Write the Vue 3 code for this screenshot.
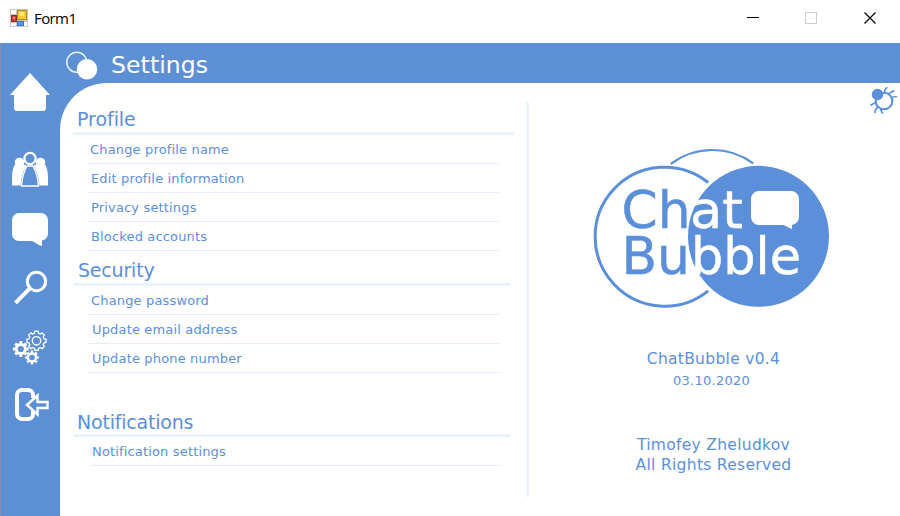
<script setup>
const sections = [
  { id: 'profile', title: 'Profile', items: ['Change profile name', 'Edit profile information', 'Privacy settings', 'Blocked accounts'] },
  { id: 'security', title: 'Security', items: ['Change password', 'Update email address', 'Update phone number'] },
  { id: 'notifications', title: 'Notifications', items: ['Notification settings'] }
]

function gearPath(cx, cy, outer, inner, teeth) {
  const step = (Math.PI * 2) / teeth
  const pt = (r, a) => `${(cx + r * Math.cos(a)).toFixed(2)} ${(cy + r * Math.sin(a)).toFixed(2)}`
  let d = ''
  for (let i = 0; i < teeth; i++) {
    const a = i * step
    d += `${i ? 'L' : 'M'}${pt(inner, a - step * 0.32)}L${pt(outer, a - step * 0.22)}L${pt(outer, a + step * 0.22)}L${pt(inner, a + step * 0.32)}`
  }
  return d + 'Z'
}
const gears = {
  large: gearPath(36.5, 20.8, 9.7, 7.8, 8),
  left: gearPath(20.8, 29, 8, 6, 8),
  bottom: gearPath(32, 37.5, 7, 5.2, 8)
}
</script>

<template>
  <div class="window">
    <header class="titlebar">
      <svg class="app-icon" width="18" height="18" viewBox="0 0 18 18">
        <rect width="18" height="18" fill="#c9c9c9" />
        <path d="M1 1h5v4H1zM1 14h5v3H1zM14 13h3v4h-3z" fill="#fff" />
        <rect x="7.5" y="1.5" width="9" height="9" fill="#f6c936" stroke="#b58a16" />
        <rect x="9" y="3" width="5" height="4" fill="#ffe583" />
        <rect x="1.5" y="6.5" width="5" height="6" fill="#c9402f" stroke="#982a22" />
        <rect x="3" y="8" width="2" height="2" fill="#f08b76" />
        <rect x="7.5" y="12.5" width="6" height="4" fill="#5c98ec" stroke="#3c70c8" />
      </svg>
      <span class="window-title">Form1</span>
      <svg class="controls" width="150" height="43" viewBox="750 0 150 43" shape-rendering="crispEdges">
        <path d="M747 17.5h12" stroke="#000" />
        <rect x="805.5" y="12.5" width="11" height="11" fill="none" stroke="#ccc" />
        <path d="M864.5 12.5l11 11M875.5 12.5l-11 11" stroke="#000" shape-rendering="auto" stroke-width="1.2" />
      </svg>
    </header>

    <div class="body">
      <nav class="sidebar">
        <svg class="home" width="60" height="50" viewBox="0 67 60 50">
          <path fill="#fff" d="M30 73L50 95H46V108a3 3 0 0 1-3 3H17a3 3 0 0 1-3-3V95H10z" />
        </svg>
        <svg class="people" width="60" height="50" viewBox="0 145 60 50">
          <g fill="#fff">
            <circle cx="19.5" cy="162.5" r="4.8" />
            <circle cx="40.5" cy="162.5" r="4.8" />
            <path d="M14.5 165H26L26 167C22.5 172 21 179 20.5 185.5H12V178C12 172 13 168 14.5 165z" />
            <path d="M45.5 165H34L34 167C37.5 172 39 179 39.5 185.5H48V178C48 172 47 168 45.5 165z" />
          </g>
          <path d="M21.5 186C22 178 24 171.5 27 166H33C36 171.5 38 178 38.5 186z" fill="#5c8fd4" stroke="#fff" stroke-width="1.4" />
          <circle cx="30" cy="158.500" r="5.600" fill="#5c8fd4" stroke="#fff" stroke-width="2.300" />
        </svg>
        <svg class="chat" width="60" height="50" viewBox="0 205 60 50">
          <path fill="#fff" d="M19 213H41a7 7 0 0 1 7 7V233.500a7 7 0 0 1-6 7V246C38.500 245.500 36 243 32 241H19a7 7 0 0 1-7-7V220a7 7 0 0 1 7-7z" />
        </svg>
        <svg class="search" width="60" height="50" viewBox="0 263 60 50">
          <circle cx="36.500" cy="281.500" r="9.200" fill="none" stroke="#fff" stroke-width="3" />
          <path d="M30 288.200L15.500 302.800" stroke="#fff" stroke-width="4" />
        </svg>
        <svg class="gears" width="60" height="50" viewBox="0 0 60 50">
          <g fill="none" stroke="#fff">
            <path :d="gears.large" stroke-width="1.300" stroke-linejoin="round" />
            <circle cx="36.500" cy="20.800" r="4.200" stroke-width="1.300" />
          </g>
          <path :d="gears.left" fill="#fff" /><circle cx="20.800" cy="29" r="3.100" fill="#5c8fd4" />
          <path :d="gears.bottom" fill="#fff" /><circle cx="32" cy="37.500" r="2.800" fill="#5c8fd4" />
        </svg>
        <svg class="exit" width="60" height="50" viewBox="0 380 60 50">
          <path d="M33 398V395a5 5 0 0 0-5-5H22a5 5 0 0 0-5 5V414a5 5 0 0 0 5 5H28a5 5 0 0 0 5-5V411" fill="none" stroke="#fff" stroke-width="4" />
          <path d="M27 405L37.500 395.500V402H47.500V408H37.500V414.500z" fill="#5c8fd4" stroke="#fff" stroke-width="2.400" />
        </svg>
      </nav>

      <div class="main">
        <div class="page-head">
          <svg width="36" height="36" viewBox="64 47 36 36">
            <circle cx="76.800" cy="62.300" r="10" fill="none" stroke="#e6f3ff" stroke-width="1.500" />
            <circle cx="87" cy="69.200" r="10.300" fill="#fff" />
          </svg>
          <h1>Settings</h1>
        </div>

        <div class="corner">
          <div class="panel">
            <div class="settings">
              <section v-for="s in sections" :key="s.id" :class="s.id">
                <h2>{{ s.title }}</h2>
                <ul>
                  <li v-for="item in s.items" :key="item">{{ item }}</li>
                </ul>
              </section>
            </div>
            <div class="divider"></div>
            <aside class="about">
              <svg class="bug" width="30" height="30" viewBox="868 85 30 30">
                <g fill="none" stroke="#5c8fd9" stroke-width="1.700">
                  <circle cx="884" cy="101" r="8.300" stroke-width="2.100" />
                  <path d="M884.500 92.500C884.500 90 885.500 88 887.500 87.500M888.500 94.500C889 92.500 891 92.500 892.500 91.500L894.500 90.500M891.500 98C893 96.500 894.500 96.500 897 96.500M876.500 102.500C874.500 102.500 873 104 870.500 105.500M878.500 107C876 108 875 109.500 875 113M880.500 108.500C881.500 111 881 112.500 883 113.500" />
                </g>
                <circle cx="877.500" cy="94.500" r="5.700" fill="#5c8fd9" />
              </svg>
              <svg class="logo" width="250" height="170" viewBox="586 144 250 170">
                <g fill="none" stroke="#5c8fd9">
                  <path d="M670.800 164A69 69 0 0 1 753.200 163.300" stroke-width="2.200" />
                  <path d="M708.200 182.500A69.500 69.500 0 1 0 708.200 290.800" stroke-width="3" />
                </g>
                <circle cx="758.500" cy="236.300" r="70.500" fill="#5c8fd9" />
                <g class="logo-text">
                  <text class="ink" x="621.500" y="228" textLength="69" lengthAdjust="spacingAndGlyphs">Ch</text>
                  <text class="light" x="690" y="228" textLength="53" lengthAdjust="spacingAndGlyphs">at</text>
                  <text class="ink" x="621.500" y="274" textLength="68.500" lengthAdjust="spacingAndGlyphs">Bu</text>
                  <text class="light" x="691" y="274" textLength="110" lengthAdjust="spacingAndGlyphs">bble</text>
                </g>
                <path fill="#fff" d="M759 191H791a8 8 0 0 1 8 8V217a8 8 0 0 1-7 8V229C789 228.500 787 226 783 225H759a8 8 0 0 1-8-8V199a8 8 0 0 1 8-8z" />
              </svg>
              <p class="version">ChatBubble v0.4</p>
              <p class="date">03.10.2020</p>
              <p class="author">Timofey Zheludkov</p>
              <p class="rights">All Rights Reserved</p>
            </aside>
          </div>
        </div>
      </div>
    </div>
  </div>
</template>

<style>
body { margin: 0; background: #fff; }
</style>

<style scoped>
.window {
  width: 900px;
  height: 516px;
  display: flex;
  flex-direction: column;
  overflow: hidden;
  background: #fff;
  color: #5c8fd9;
  font-family: Verdana, "DejaVu Sans", sans-serif;
}
.window svg { display: block; flex: none; }
.titlebar {
  height: 43px;
  flex: none;
  display: flex;
  align-items: flex-start;
  background: #fff;
}
.app-icon { margin: 9px 0 0 10px; }
.window-title {
  margin: 8px 0 0 6px;
  font: 15px/20px "Open Sans", "Noto Sans", sans-serif;
  letter-spacing: -0.6px;
  color: #000;
}
.controls { margin-left: auto; overflow: visible; }
.body { flex: 1; display: flex; min-height: 0; }
.sidebar {
  width: 60px;
  box-sizing: border-box;
  flex: none;
  background: #5c8fd4;
  box-shadow: inset 1px 0 #7d93b0;
  padding-top: 24px;
  display: flex;
  flex-direction: column;
}
.people { margin-top: 28px; }
.chat { margin-top: 10px; }
.search { margin-top: 8px; }
.gears { margin-top: 7px; }
.exit { margin-top: 10px; }
.main { flex: 1; display: flex; flex-direction: column; min-width: 0; }
.page-head {
  height: 40px;
  flex: none;
  display: flex;
  align-items: flex-start;
  background: #5c8fd4;
  padding: 4px 0 0 4px;
  box-sizing: border-box;
}
h1 {
  margin: 4px 0 0 11px;
  font-size: 23.5px;
  line-height: 28px;
  font-weight: 400;
  letter-spacing: 0.1px;
  color: #fff;
}
.corner { flex: 1; background: #5c8fd4; display: flex; min-height: 0; }
.panel { flex: 1; display: flex; background: #fff; border-top-left-radius: 47px; }
.settings { width: 466px; flex: none; }
h2 {
  margin: 0 0 0 14px;
  height: 35px;
  width: 437px;
  box-sizing: border-box;
  border-bottom: 3px solid #eaf2ff;
  padding-left: 4px;
  display: flex;
  align-items: flex-end;
  font-size: 19px;
  line-height: 25px;
  font-weight: 400;
  letter-spacing: -0.2px;
}
.profile h2 { height: 52px; width: 441px; margin-left: 13px; letter-spacing: -0.05px; }
.notifications h2 { height: 64px; padding-left: 3px; line-height: 24px; }
ul { list-style: none; margin: 0 0 0 29px; padding: 0; width: 411px; }
.profile ul { margin-left: 28px; width: 411px; }
.notifications ul { margin-left: 30px; }
li {
  height: 29px;
  box-sizing: border-box;
  border-bottom: 1px solid #e2edff;
  padding-left: 2px;
  font-size: 13px;
  line-height: 30px;
  letter-spacing: 0.16px;
}
.profile li:nth-child(n + 2), .security li:nth-child(n + 2) { padding-left: 3px; }
.divider { width: 3px; height: 395px; margin-top: 19px; background: #ebf3ff; }
.about { flex: 1; display: flex; flex-direction: column; align-items: center; padding-right: 7px; }
.bug { align-self: flex-end; margin: 2px -5px 0 0; }
.logo { margin-top: 29px; }
.about p { margin: 0 0 0 5px; white-space: nowrap; letter-spacing: 0.3px; }
.version { padding-top: 35px; font-size: 15.5px; line-height: 20px; }
.about .date { font-size: 13px; line-height: 24px; letter-spacing: 0.25px; margin-left: 1px; }
.author { padding-top: 42px; font-size: 15.5px; line-height: 20px; }
.rights { font-size: 15.5px; line-height: 20px; }
.logo-text { font-size: 52px; }
.ink { fill: #5c8fd9; stroke: #5c8fd9; stroke-width: 0.5px; }
.light { fill: #fff; stroke: #fff; stroke-width: 0.5px; }
</style>
